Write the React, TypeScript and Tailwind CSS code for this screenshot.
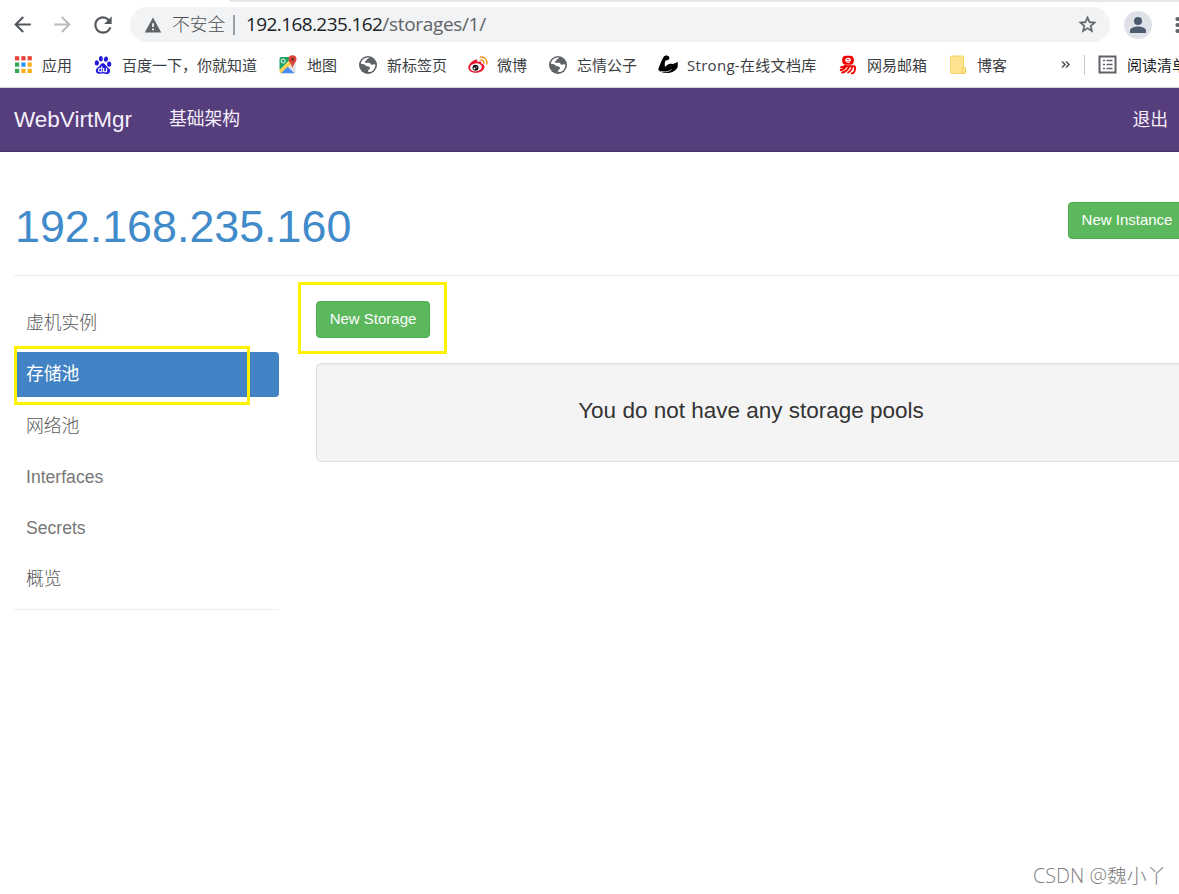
import React from "react";
import { SiBaidu } from "react-icons/si";

const ui = "font-['Open_Sans','Noto_Sans_CJK_SC',sans-serif]";
const arial = "font-['Liberation_Sans','Noto_Sans_CJK_SC',sans-serif]";

function AppsIcon() {
  const colors = ["#ea4335", "#ea4335", "#ea4335", "#34a853", "#2196f3", "#fbae17", "#34a853", "#fbae17", "#fbae17"];
  return (
    <svg width="20" height="20" viewBox="0 0 20 20">
      {colors.map((c, i) => (
        <rect key={i} x={2 + (i % 3) * 6.3} y={1.2 + Math.floor(i / 3) * 6.3} width="4.2" height="4.2" fill={c} />
      ))}
    </svg>
  );
}

function MapsIcon() {
  return (
    <svg width="20" height="20" viewBox="0 0 20 20">
      <path d="M3.500 18.300L15 7l2.500 1v8.500q0 1.800-1.800 1.800z" fill="#dfe2e5" />
      <path d="M1.500 15L12 5l3 2.500L4 18.300H3q-1.500 0-1.500-2z" fill="#ffd04b" />
      <path d="M1.500 15L12.500 4V2h-9q-2 0-2 2z" fill="#1ea362" />
      <path d="M3 18.300l6.500-6.600 7 6.600z" fill="#4a8af4" />
      <circle cx="5.200" cy="6" r="2" fill="none" stroke="#fff" strokeWidth="1" />
      <path d="M14.500 0.300a4 4 0 0 0-4 4c0 3 3.200 4.200 4 9 .8-4.800 4-6 4-9a4 4 0 0 0-4-4z" fill="#dc4437" />
      <circle cx="14.500" cy="4.300" r="1.500" fill="#7e2c24" />
    </svg>
  );
}

function GlobeIcon() {
  return (
    <svg width="20" height="20" viewBox="0 0 20 20">
      <circle cx="10" cy="10" r="9" fill="#5f6368" />
      <path
        d="M11.200 2.700c-.8 1.300-2.500 1.200-2.700 2.200-.2 1.200-1.600 1-1.700 2 0 .9 1 .8 1.700.8h2.700c1.400 0 1 1.800 2.200 2 1.500.2 2.200-.6 3.800-.4.4 3-1.300 6.400-4.200 7.500-1.200.3-2 .2-2.800.2v-2c1.500-.3 2.200-1.500 1.500-2.700-.6-.9-1.700-1-2.700-1.100-1.400-.1-1.800-1.600-3.200-2L2.800 8.700C3.500 5 7 2 11.200 2.700z"
        fill="#fff"
      />
    </svg>
  );
}

function WeiboIcon() {
  return (
    <svg width="20" height="20" viewBox="0 0 20 20">
      <path
        d="M8 4.600C9.500 4.200 9.500 5.600 9.200 7c2-.8 4.800-.9 4.100 1.600 1.900.5 3.200 1.500 3.100 3.300-.1 3.300-4 5.800-8.300 5.800-4.200 0-7.800-2-7.800-5.300 0-3 4.500-7.200 7.700-7.800z"
        fill="#e6162d"
      />
      <ellipse cx="7.900" cy="12.400" rx="5.900" ry="4" fill="#fff" transform="rotate(-7 7.900 12.400)" />
      <circle cx="7.500" cy="12.700" r="3" fill="#111" />
      <circle cx="6.500" cy="13.500" r="1" fill="#fff" />
      <circle cx="8.600" cy="12" r=".6" fill="#fff" />
      <path d="M12.500 2.100a5.500 5.500 0 0 1 6.200 7M13 5.100a2.600 2.600 0 0 1 2.800 3.200" fill="none" stroke="#f7941d" strokeWidth="1.500" strokeLinecap="round" />
    </svg>
  );
}

function ArmIcon() {
  return (
    <svg width="20" height="20" viewBox="0 0 20 20">
      <path
        d="M6 1.200L8.500 .2l2.700 1.600.2 2.200-1.800 1.200-2 .4c-1.100 2.200-1 4.400-.4 6.400 1.500-2 3-3.300 5-3.300 1.700 0 2.500.4 3.500 0l4.100-1.800-.1 5.100c-1.300 3-4.300 5-7.800 5.800-4 .8-7.800.2-11.500-2.800L.3 14 3.200 6.500z"
        fill="#000"
      />
      <path d="M3 16.300c4 1.200 8.200.4 10.500-1.800" fill="none" stroke="#fff" strokeWidth=".7" />
    </svg>
  );
}

function MailIcon() {
  return (
    <svg width="20" height="20" viewBox="0 0 20 20" fill="none" stroke="#f00000">
      <rect x="4.200" y=".8" width="11.600" height="9" rx="3.800" fill="#f00000" stroke="none" />
      <path d="M7.800 5.300h4.600c0-2.700-4.600-2.700-4.600 0 0 2.200 2.800 2.300 4.300 1.500" stroke="#fff" strokeWidth="1.200" />
      <path d="M2.200 12.400c3-.3 4.800-1.100 6-2.300M6 11.300h9.800c1.600 0 1.400 1.400 1.200 2.700-.3 3-1.200 4.600-4 4.300M7.500 12c-1 1.800-2.600 2.800-5.600 3.300M11 12c-1.300 3-3.800 5-7.500 5.800" strokeWidth="1.900" />
      <path d="M14.500 12c-.8 2.700-2.500 4.700-5 6" strokeWidth="1.500" />
    </svg>
  );
}

function FolderIcon() {
  return (
    <svg width="20" height="20" viewBox="0 0 20 20">
      <path d="M3.500 1h11q1 0 1 1v10l2 1v4q0 1.500-1.500 1.500H3.500q-1 0-1-1V2q0-1 1-1z" fill="#ffe391" stroke="#f5d468" />
      <path d="M14 18.500v-4.200l1.500-2.200 2 .9v4q0 1.500-1.500 1.500z" fill="#ffe391" stroke="#edc54d" strokeWidth=".8" />
    </svg>
  );
}

const bookmarks = [
  { label: "应用", icon: <AppsIcon />, w: "w-[80px]" },
  { label: "百度一下，你就知道", icon: <SiBaidu className="size-[18px] text-[#2319dc]" />, w: "w-[185px]" },
  { label: "地图", icon: <MapsIcon />, w: "w-[80px]" },
  { label: "新标签页", icon: <GlobeIcon />, w: "w-[110px]" },
  { label: "微博", icon: <WeiboIcon />, w: "w-[80px]" },
  { label: "忘情公子", icon: <GlobeIcon />, w: "w-[110px]" },
  { label: "Strong-在线文档库", icon: <ArmIcon />, w: "w-[180px] tracking-[0.3px]" },
  { label: "网易邮箱", icon: <MailIcon />, w: "w-[110px]" },
  { label: "博客", icon: <FolderIcon />, w: "w-[112px]" },
];

function Toolbar() {
  return (
    <div className="flex h-10 shrink-0 items-center pt-[5px] pl-[10px]">
      <svg className="mr-[15px] size-[25px] shrink-0" viewBox="0 0 24 24" fill="#54585d">
        <path d="M20 11H7.830l5.590-5.590L12 4l-8 8 8 8 1.410-1.410L7.830 13H20v-2z" />
      </svg>
      <svg className="mr-[15px] size-[25px] shrink-0" viewBox="0 0 24 24" fill="#babcbe">
        <path d="M12 4l-1.410 1.410L16.170 11H4v2h12.170l-5.580 5.590L12 20l8-8z" />
      </svg>
      <svg className="size-[26px] shrink-0" viewBox="0 0 24 24" fill="#54585d">
        <path d="M17.650 6.350A7.958 7.958 0 0 0 12 4c-4.420 0-7.990 3.580-7.990 8s3.570 8 7.990 8c3.730 0 6.840-2.550 7.730-6h-2.080A5.990 5.990 0 0 1 12 18c-3.310 0-6-2.690-6-6s2.690-6 6-6c1.660 0 3.140.69 4.220 1.780L13 11h7V4l-2.350 2.350z" />
      </svg>
      <div className="ml-[14px] flex h-[35px] w-[980px] shrink-0 items-center rounded-full bg-[#f1f3f4] pl-[14px]">
        <svg className="size-[18px]" viewBox="0 0 24 24" fill="#5f6368">
          <path d="M1 22h22L12 2 1 22zm12.200-3h-2.400v-2.500h2.400V19zm0-4.200h-2.400V9.500h2.400v5.300z" />
        </svg>
        <span className="mb-[2px] ml-[10px] w-[53px] text-[17.8px] leading-[26px] font-light whitespace-nowrap text-[#4d5156]">
          不安全
        </span>
        <span className="ml-[8px] h-[20px] w-[2px] bg-[#9a9da1]" />
        <span className="mb-[2px] ml-[11px] flex text-[19px] leading-[26px] whitespace-nowrap text-[#5f6368]">
          <span className="tracking-[-0.6px] text-[#202124]">192.168.235.162</span>
          <span className="tracking-[-0.33px]">/storages/1/</span>
        </span>
        <svg className="mr-[12px] ml-auto size-[21px]" viewBox="0 0 24 24" fill="#5f6368" stroke="#5f6368" strokeWidth=".4">
          <path d="M22 9.240l-7.190-.62L12 2 9.190 8.630 2 9.240l5.460 4.730L5.820 21 12 17.270 18.180 21l-1.630-7.030L22 9.240zM12 15.400l-3.760 2.270 1-4.280-3.320-2.880 4.380-.38L12 6.100l1.710 4.040 4.380.38-3.320 2.880 1 4.280L12 15.400z" />
        </svg>
      </div>
      <svg className="ml-[14px] size-[28px] shrink-0" viewBox="0 0 28 28">
        <circle cx="14" cy="14" r="14" fill="#dee1e6" />
        <circle cx="14" cy="10" r="4" fill="#4d5a70" />
        <path d="M6 22v-2.500c0-2.700 5.300-4 8-4s8 1.300 8 4V22z" fill="#4d5a70" />
      </svg>
      <svg className="ml-[23px] h-[18px] w-[4px] shrink-0" viewBox="0 0 4 18" fill="#5f6368">
        <circle cx="2.500" cy="3" r="2.100" />
        <circle cx="2.500" cy="9" r="2.100" />
        <circle cx="2.500" cy="15" r="2.100" />
      </svg>
    </div>
  );
}

function BookmarkBar() {
  return (
    <div className="flex h-[46px] shrink-0 items-center border-b border-[#d5d3da] pl-[13px] text-[15px] text-[#3c4043]">
      {bookmarks.map((b) => (
        <div key={b.label} className={`flex shrink-0 items-center gap-[9px] whitespace-nowrap ${b.w}`}>
          <span className="flex size-5 shrink-0 items-center justify-center">{b.icon}</span>
          <span className="pt-[2px]">{b.label}</span>
        </div>
      ))}
      <svg className="mt-[2px] size-[11px] shrink-0" viewBox="0 0 11 11" fill="none" stroke="#54585d" strokeWidth="1.600">
        <path d="M2 1.500l3 3-3 3M6 1.500l3 3-3 3" />
      </svg>
      <span className="ml-[13px] h-5 w-px shrink-0 bg-[#c4c7ca]" />
      <svg className="ml-[13px] size-[19px] shrink-0" viewBox="0 0 19 19" fill="none" stroke="#5f6368">
        <rect x="1.500" y="1.500" width="16" height="16" strokeWidth="2" />
        <path d="M5 5.500h2M8.500 5.500h6M5 9.500h2M8.500 9.500h6M5 13.500h2M8.500 13.500h6" strokeWidth="1.600" />
      </svg>
      <span className="ml-[10px] shrink-0 pt-[2px] whitespace-nowrap text-[#202124]">阅读清单</span>
    </div>
  );
}

const links = ["虚机实例", "存储池", "网络池", "Interfaces", "Secrets", "概览"];

export default function App() {
  return (
    <div className={`relative flex h-[894px] w-[1179px] flex-col overflow-hidden bg-white ${arial}`}>
      <div className={`flex flex-col ${ui}`}>
        <div className="ml-[229px] h-[2px] shrink-0 rounded-bl-lg bg-[#e4e7eb]" />
        <Toolbar />
        <BookmarkBar />
      </div>
      <nav className="flex h-[64px] shrink-0 items-center border-b border-[#463265] bg-[#563d7c] pr-[11px] pl-[14px] text-[17.8px] text-[#f4effa]">
        <span className="w-[155px] text-[22.5px]">WebVirtMgr</span>
        <span>基础架构</span>
        <span className="ml-auto pt-px">退出</span>
      </nav>
      <header className="ml-[14px] flex h-[124px] shrink-0 items-start justify-between border-b border-[#eeeeee]">
        <h1 className="pt-[49px] pl-px text-[44.8px] leading-[50px] text-[#428bca]">192.168.235.160</h1>
        <button className="mt-[50px] -mr-[7px] h-[37px] w-[118px] shrink-0 rounded-[4px] border border-[#4cae4c] bg-[#5cb85c] text-[15px] whitespace-nowrap text-white">
          New Instance
        </button>
      </header>
      <main className="flex">
        <aside className="ml-[14px] flex h-[334px] w-[265px] shrink-0 flex-col gap-[6.2px] border-b border-[#eeeeee] pt-[25px]">
          {links.map((l, i) => (
            <a
              key={l}
              className={
                i === 1
                  ? "flex h-[45px] shrink-0 items-center rounded-[4px] bg-[#4183c4] pl-[12px] text-[17.8px] text-white"
                  : /^[A-Z]/.test(l)
                    ? "flex h-[45px] shrink-0 items-center pl-[12px] text-[17.6px] text-[#777777]"
                    : "flex h-[45px] shrink-0 items-center pl-[12px] text-[17.8px] font-light text-[#595959]"
              }
            >
              {l}
            </a>
          ))}
        </aside>
        <section className="-mr-3 ml-[37px] grow pt-[25px]">
          <button className="block h-[37px] w-[114px] rounded-[4px] border border-[#4cae4c] bg-[#5cb85c] text-[15px] whitespace-nowrap text-white">
            New Storage
          </button>
          <div className="mt-[25px] h-[99px] rounded-[5px] border border-[#e0e0e0] bg-[#f4f4f4] pt-[33px] text-center shadow-[inset_0_1px_1px_rgba(0,0,0,0.05)]">
            <h3 className="pr-[5px] text-[22.5px] leading-[28px] text-[#333333]">You do not have any storage pools</h3>
          </div>
        </section>
      </main>
      <div className="absolute top-[346px] left-[14px] h-[59px] w-[236px] border-3 border-[#fff200]" />
      <div className="absolute top-[282px] left-[298px] h-[72px] w-[149px] border-3 border-[#fff200]" />
      <div className={`absolute top-[862px] left-[1033px] text-[19.8px] leading-[28px] font-light whitespace-nowrap text-[#808080] ${ui}`}>
        CSDN @魏小丫
      </div>
    </div>
  );
}
